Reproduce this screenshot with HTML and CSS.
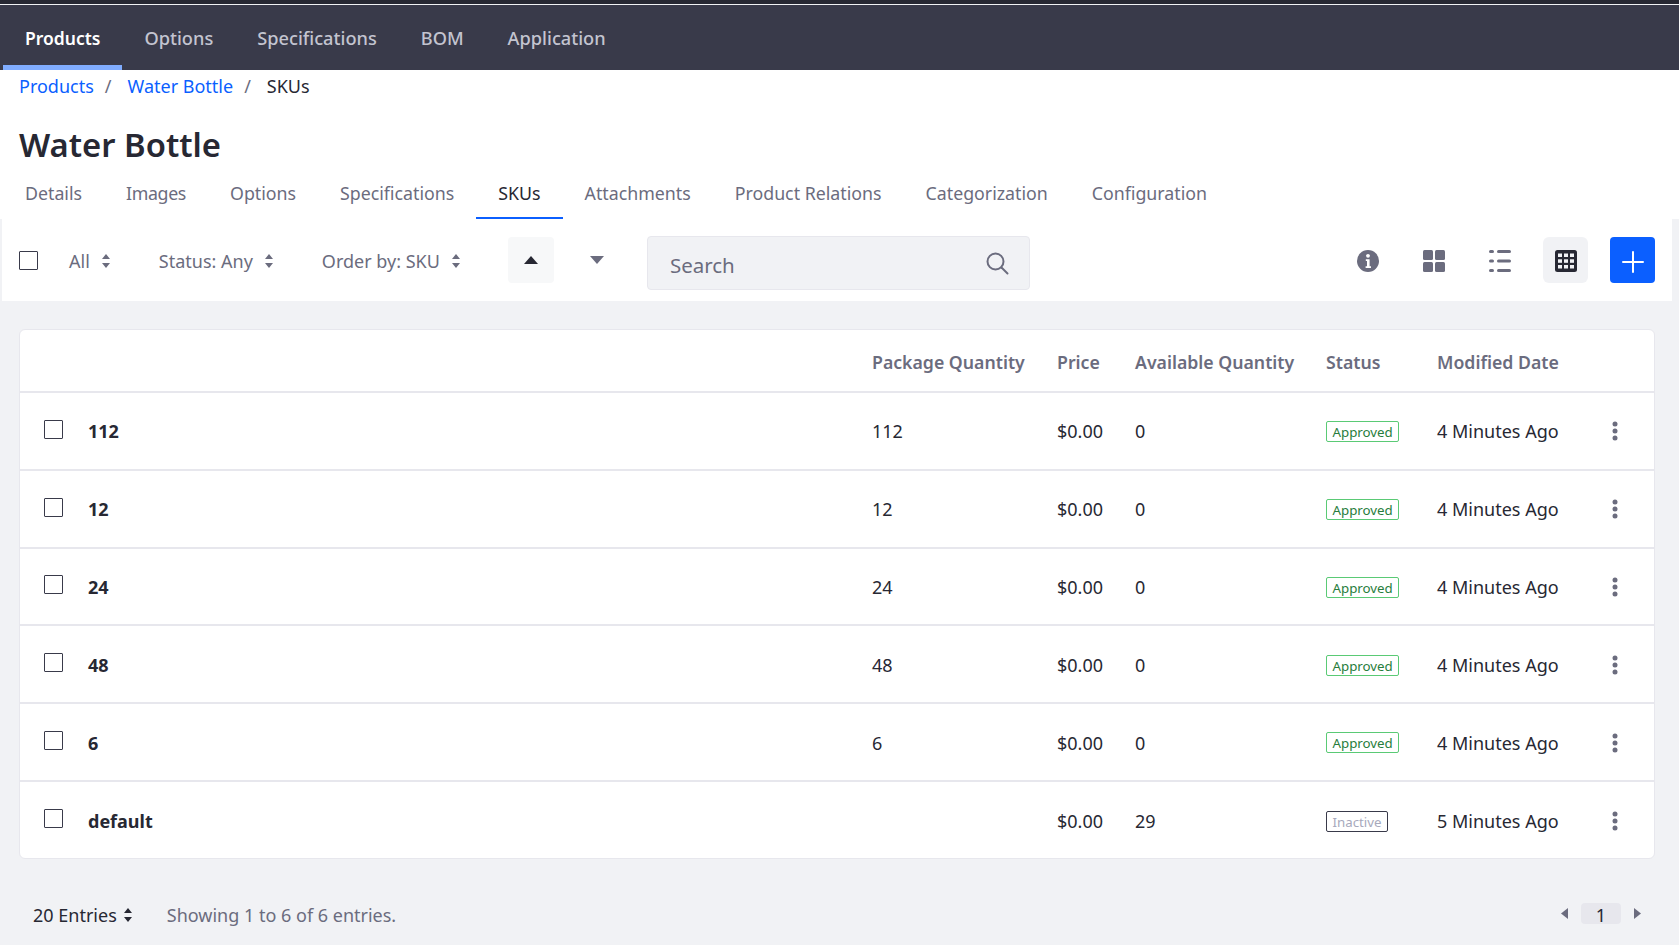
FILE: index.html
```html
<!DOCTYPE html>
<html lang="en">
<head>
<meta charset="utf-8">
<title>Water Bottle - SKUs</title>
<link rel="stylesheet" href="styles.css">
</head>
<body>
<svg class="sprite" width="0" height="0" aria-hidden="true">
  <symbol id="updown" viewBox="0 0 8 14"><path d="M4 0 8 5H0zM4 14 0 9h8z"/></symbol>
  <symbol id="dots" viewBox="0 0 6 20"><circle cx="3" cy="3" r="2.5"/><circle cx="3" cy="10" r="2.5"/><circle cx="3" cy="17" r="2.5"/></symbol>
</svg>
<div class="topstrip"></div>
<nav class="topnav">
  <a class="topnav-item active">Products</a>
  <a class="topnav-item">Options</a>
  <a class="topnav-item">Specifications</a>
  <a class="topnav-item">BOM</a>
  <a class="topnav-item">Application</a>
</nav>
<header class="head">
  <div class="crumbs"><a>Products</a><span class="sep">/</span><a>Water Bottle</a><span class="sep">/</span><span>SKUs</span></div>
  <h1 class="title">Water Bottle</h1>
  <div class="tabs">
    <a class="tab">Details</a><a class="tab tab-tight">Images</a><a class="tab">Options</a><a class="tab">Specifications</a><a class="tab active">SKUs</a><a class="tab">Attachments</a><a class="tab">Product Relations</a><a class="tab">Categorization</a><a class="tab">Configuration</a>
  </div>
</header>
<main class="main">
  <div class="toolbar">
    <span class="check tool-check"></span>
    <span class="filter f-all">All <svg class="ud"><use href="#updown"/></svg></span>
    <span class="filter f-status">Status: Any <svg class="ud"><use href="#updown"/></svg></span>
    <span class="filter f-order">Order by: SKU <svg class="ud"><use href="#updown"/></svg></span>
    <span class="sortbtn on"><svg width="14" height="8" viewBox="0 0 14 8"><path d="M7 0 14 8H0z"/></svg></span>
    <span class="sortbtn"><svg width="14" height="8" viewBox="0 0 14 8"><path d="M0 0H14L7 8z"/></svg></span>
    <div class="search"><span class="search-label">Search</span>
      <svg width="24" height="24" viewBox="0 0 24 24" fill="none" stroke="#6b6c7e" stroke-width="2"><circle cx="10.5" cy="10.5" r="8"/><path d="M16.5 16.5 22.5 22.5" stroke-linecap="round"/></svg>
    </div>
    <div class="views">
      <span class="vbtn"><svg width="22" height="22" viewBox="0 0 22 22"><circle cx="11" cy="11" r="11" fill="#6b6c7e"/><circle cx="11" cy="5.8" r="1.9" fill="#fff"/><path d="M8.8 9.2h3.8v7h1.4v1.8H8.6v-1.8h1.4v-5.2H8.8z" fill="#fff"/></svg></span>
      <span class="vbtn"><svg width="22" height="22" viewBox="0 0 22 22" fill="#6b6c7e"><rect width="10" height="10" rx="1.5"/><rect x="12" width="10" height="10" rx="1.5"/><rect y="12" width="10" height="10" rx="1.5"/><rect x="12" y="12" width="10" height="10" rx="1.5"/></svg></span>
      <span class="vbtn"><svg width="22" height="22" viewBox="0 0 22 22" fill="#6b6c7e"><rect width="5" height="3" rx="1.5"/><rect x="8" width="14" height="3" rx="1.5"/><rect y="9.500" width="5" height="3" rx="1.500"/><rect x="8" y="9.500" width="14" height="3" rx="1.500"/><rect y="19" width="5" height="3" rx="1.500"/><rect x="8" y="19" width="14" height="3" rx="1.500"/></svg></span>
      <span class="vbtn on"><svg width="22" height="22" viewBox="0 0 22 22"><rect width="22" height="22" rx="2.500" fill="#272833"/><g fill="#f1f2f5"><rect x="3" y="3.500" width="4" height="3.500"/><rect x="9" y="3.500" width="4" height="3.500"/><rect x="15" y="3.500" width="4" height="3.500"/><rect x="3" y="9.300" width="4" height="3.500"/><rect x="9" y="9.300" width="4" height="3.500"/><rect x="15" y="9.300" width="4" height="3.500"/><rect x="3" y="15" width="4" height="3.500"/><rect x="9" y="15" width="4" height="3.500"/><rect x="15" y="15" width="4" height="3.500"/></g></svg></span>
      <span class="addbtn"><svg width="22" height="22" viewBox="0 0 22 22"><path d="M11 1v20M1 11h20" stroke="#fff" stroke-width="2" stroke-linecap="round"/></svg></span>
    </div>
  </div>

  <div class="card">
    <table class="grid">
      <thead>
        <tr><th class="c-check"></th><th class="c-name"></th><th class="c-pack">Package Quantity</th><th class="c-price">Price</th><th class="c-avail">Available Quantity</th><th class="c-status">Status</th><th class="c-date">Modified Date</th><th class="c-menu"></th></tr>
      </thead>
      <tbody>
        <tr><td class="c-check"><span class="check"></span></td><td class="c-name">112</td><td>112</td><td>$0.00</td><td>0</td><td><span class="badge ok">Approved</span></td><td>4 Minutes Ago</td><td class="c-menu"><svg class="dots"><use href="#dots"/></svg></td></tr>
        <tr><td class="c-check"><span class="check"></span></td><td class="c-name">12</td><td>12</td><td>$0.00</td><td>0</td><td><span class="badge ok">Approved</span></td><td>4 Minutes Ago</td><td class="c-menu"><svg class="dots"><use href="#dots"/></svg></td></tr>
        <tr><td class="c-check"><span class="check"></span></td><td class="c-name">24</td><td>24</td><td>$0.00</td><td>0</td><td><span class="badge ok">Approved</span></td><td>4 Minutes Ago</td><td class="c-menu"><svg class="dots"><use href="#dots"/></svg></td></tr>
        <tr><td class="c-check"><span class="check"></span></td><td class="c-name">48</td><td>48</td><td>$0.00</td><td>0</td><td><span class="badge ok">Approved</span></td><td>4 Minutes Ago</td><td class="c-menu"><svg class="dots"><use href="#dots"/></svg></td></tr>
        <tr><td class="c-check"><span class="check"></span></td><td class="c-name">6</td><td>6</td><td>$0.00</td><td>0</td><td><span class="badge ok">Approved</span></td><td>4 Minutes Ago</td><td class="c-menu"><svg class="dots"><use href="#dots"/></svg></td></tr>
        <tr><td class="c-check"><span class="check"></span></td><td class="c-name">default</td><td></td><td>$0.00</td><td>29</td><td><span class="badge off">Inactive</span></td><td>5 Minutes Ago</td><td class="c-menu"><svg class="dots"><use href="#dots"/></svg></td></tr>
      </tbody>
    </table>
  </div>

  <footer class="pager">
    <span class="entries">20 Entries <svg class="ud dark"><use href="#updown"/></svg></span>
    <span class="showing">Showing 1 to 6 of 6 entries.</span>
    <div class="pages">
      <svg width="7" height="11" viewBox="0 0 7 11" fill="#6b6c7e"><path d="M7 0V11L0 5.500z"/></svg>
      <span class="page">1</span>
      <svg width="7" height="11" viewBox="0 0 7 11" fill="#6b6c7e"><path d="M0 0V11L7 5.500z"/></svg>
    </div>
  </footer>
</main>
</body>
</html>
```
FILE: styles.css
```css
* { box-sizing: border-box; }
html, body { margin: 0; padding: 0; }
body {
  width: 1679px;
  height: 949px;
  overflow: hidden;
  background: #fff;
  color: #272833;
  font-family: "Noto Sans", "Open Sans", sans-serif;
  font-size: 18px;
}
.sprite { position: absolute; }
.topstrip { height: 5px; background: #272833; border-bottom: 1px solid #f1f2f5; }
.topnav {
  display: flex;
  height: 65px;
  padding-left: 3px;
  background: #393a4a;
}
.topnav-item {
  display: flex;
  align-items: center;
  padding: 5px 22px 0;
  height: 65px;
  color: #c3c4d0;
  font-size: 18.2px;
  font-weight: 500;
  border-bottom: 5px solid transparent;
}
.topnav-item.active { color: #fff; font-size: 17.5px; font-weight: 600; border-bottom-color: #80acff; }

.crumbs { display: flex; align-items: center; height: 32px; padding-left: 19px; font-size: 18px; }
.crumbs a { color: #0b5fff; }
.sep { color: #6b6c7e; margin: 0 16px 0 11px; }
.title { margin: 20px 0 0 19px; font-size: 32.8px; line-height: 45px; font-weight: 600; }
.tabs { display: flex; height: 52px; padding-left: 3px; }
.tab {
  display: flex;
  align-items: center;
  height: 52px;
  padding: 1px 22px 0;
  color: #6b6c7e;
  font-size: 17.78px;
  border-bottom: 2px solid transparent;
}
.tab-tight { letter-spacing: -0.35px; }
.tab.active { color: #272833; border-bottom-color: #0b5fff; }

.main { height: 726px; background: #f1f2f5; }
.toolbar {
  display: flex;
  align-items: center;
  height: 82px;
  margin: 0 7px 0 2px;
  background: #fff;
  color: #6b6c7e;
}
.check {
  display: block;
  width: 19px;
  height: 19px;
  background: #fff;
  border: 1.5px solid #393a4a;
  border-radius: 1px;
}
.tool-check { margin: 1px 0 0 17px; }
.filter { display: flex; align-items: center; gap: 12px; white-space: nowrap; margin-top: 2px; }
.ud { width: 8px; height: 14px; fill: #6b6c7e; }
.ud.dark { fill: #272833; }
.f-all { margin-left: 31px; }
.f-status { margin-left: 49px; }
.f-order { margin-left: 49px; }
.sortbtn {
  display: flex;
  align-items: center;
  justify-content: center;
  width: 46px;
  height: 46px;
  fill: #6b6c7e;
  border-radius: 4px;
}
.sortbtn.on { margin-left: 48px; margin-right: 20px; background: #f7f8f9; fill: #272833; }
.search {
  display: flex;
  align-items: center;
  justify-content: space-between;
  width: 383px;
  height: 54px;
  margin: 6px 0 0 27px;
  padding: 0 20px 0 22px;
  background: #f1f2f5;
  border: 1px solid #e7e7ed;
  border-radius: 4px;
  font-size: 20.5px;
}
.search-label { margin-top: 4px; }
.views { display: flex; align-items: center; gap: 20px; margin: 0 17px 0 auto; }
.vbtn {
  display: flex;
  align-items: center;
  justify-content: center;
  width: 46px;
  height: 46px;
  padding-top: 1px;
  border-radius: 6px;
}
.vbtn.on { width: 45px; background: #f1f2f5; }
.addbtn {
  display: flex;
  align-items: center;
  justify-content: center;
  width: 45px;
  height: 46px;
  margin-left: 2px;
  padding-top: 4px;
  background: #0b5fff;
  border-radius: 4px;
}

.card {
  height: 530px;
  margin: 28px 24px 0 19px;
  background: #fff;
  border: 1px solid #e7e7ed;
  border-radius: 6px;
  overflow: hidden;
}
.grid { width: 100%; height: 100%; border-collapse: collapse; table-layout: fixed; }
.grid th {
  height: 62px;
  padding: 2px 0 0;
  text-align: left;
  font-size: 17.7px;
  font-weight: 600;
  color: #6b6c7e;
  white-space: nowrap;
  border-bottom: 2px solid #e7e7ed;
}
.grid td { height: 77.8px; padding: 1px 0 0; font-size: 18px; border-bottom: 2px solid #e7e7ed; white-space: nowrap; }
.grid tbody tr:last-child td { border-bottom: 0; }
.c-check .check { margin: -4px 0 0 24px; }
.grid .c-check { width: 68px; }
.grid .c-name { width: 784px; font-weight: 700; }
.grid .c-pack { width: 185px; }
.grid .c-price { width: 78px; }
.grid .c-avail { width: 191px; }
.grid .c-status { width: 111px; }
.grid .c-date { width: 175px; }
.dots { display: block; width: 6px; height: 20px; fill: #6b6c7e; }
.badge {
  display: inline-block;
  padding: 0 5.5px;
  height: 21px;
  margin-bottom: 2px;
  line-height: 20px;
  font-size: 13.3px;
  background: #fff;
  border: 1px solid;
  border-radius: 2px;
  vertical-align: middle;
}
.badge.ok { color: #287d3c; border-color: #5aca75; }
.badge.off { color: #a7a9bc; border-color: #393a4a; }

.pager { display: flex; align-items: center; height: 60px; margin-top: 26px; padding-left: 33px; }
.entries { display: flex; align-items: center; gap: 7px; }
.showing { margin-left: 35px; color: #6b6c7e; }
.pages { display: flex; align-items: center; gap: 13px; margin: 0 38px 4px auto; }
.page {
  display: block;
  width: 40px;
  height: 21px;
  line-height: 24px;
  text-align: center;
  background: #e7e7ed;
  border-radius: 4px;
}
```
